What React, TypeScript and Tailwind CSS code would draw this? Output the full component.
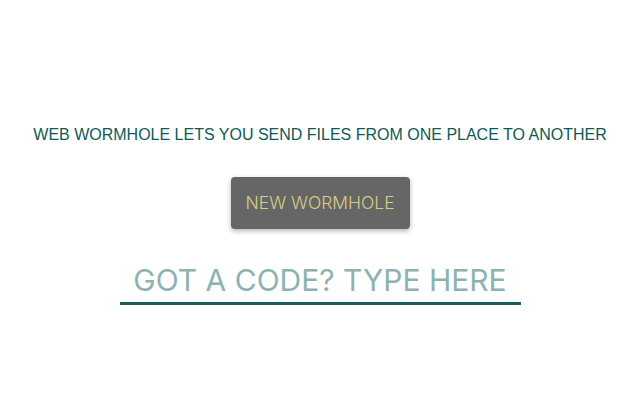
import { useState } from 'react';

export default function App() {
  const [code, setCode] = useState('');

  return (
    <div className="min-h-[400px] w-full bg-white flex flex-col items-center pt-[123px]">
      <h1 className="text-[16px] leading-6 text-[#0e5a56] font-['Liberation_Sans',Arial,sans-serif] font-normal">
        WEB WORMHOLE LETS YOU SEND FILES FROM ONE PLACE TO ANOTHER
      </h1>

      <button className="mt-[30px] h-[52px] w-[179px] rounded bg-[#666666] text-[#d8cd86] text-[17.5px] font-['Inter',sans-serif] font-light shadow-[0_2px_5px_rgba(0,0,0,0.3)]">
        NEW WORMHOLE
      </button>

      <input
        value={code}
        onChange={(e) => setCode(e.target.value)}
        placeholder="GOT A CODE? TYPE HERE"
        className="mt-[29px] h-[47px] w-[401px] border-b-[3px] border-[#1a5d5a] bg-transparent text-center text-[30px] text-[#1a5d5a] font-['Inter',sans-serif] outline-none placeholder:text-[#8db3b0]"
      />
    </div>
  );
}
